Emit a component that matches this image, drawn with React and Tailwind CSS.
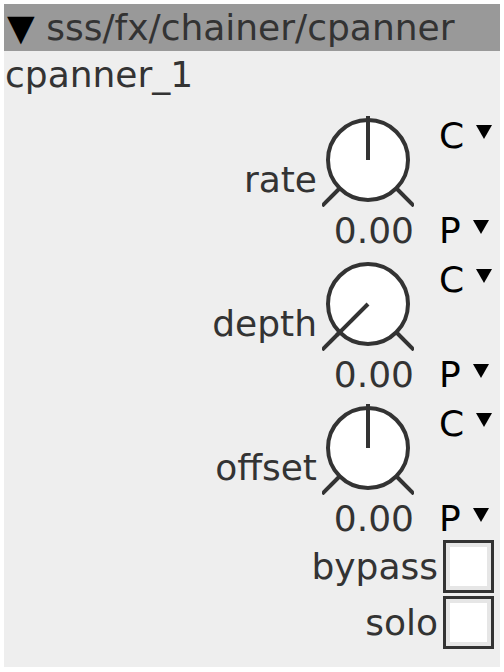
import React from "react";

function Knob({ angle }) {
  const cx = 46, cy = 48;
  const rad = (a) => (a * Math.PI) / 180;
  const ix = cx + 44 * Math.sin(rad(angle));
  const iy = cy - 44 * Math.cos(rad(angle));
  const t = (a, r) => [cx + r * Math.sin(rad(a)), cy - r * Math.cos(rad(a))];
  const [l1x, l1y] = t(-135, 40);
  const [l2x, l2y] = t(-135, 65);
  const [r1x, r1y] = t(135, 40);
  const [r2x, r2y] = t(135, 65);
  return (
    <svg width="92" height="95" viewBox="0 0 92 95" className="block w-[92px] h-[95px] shrink-0">
      <circle cx={cx} cy={cy} r="40" fill="#ffffff" stroke="#333333" strokeWidth="4" />
      <line x1={l1x} y1={l1y} x2={l2x} y2={l2y} stroke="#333333" strokeWidth="4" />
      <line x1={r1x} y1={r1y} x2={r2x} y2={r2y} stroke="#333333" strokeWidth="4" />
      <line x1={cx} y1={cy} x2={ix} y2={iy} stroke="#333333" strokeWidth="4" />
    </svg>
  );
}

function Drop({ letter }) {
  return (
    <div className="flex items-start h-[47px] pl-[25px]">
      <span className="leading-[47px] text-black shrink-0">{letter}</span>
      <svg width="16" height="14" viewBox="0 0 16 14" className="block w-[16px] h-[14px] shrink-0 mt-[13px] ml-[12px]">
        <polygon points="0,0 16,0 8,14" fill="#000000" />
      </svg>
    </div>
  );
}

function Param({ label, angle }) {
  return (
    <div className="h-[142px] flex justify-end">
      <div className="mt-[44px] leading-[47px] pr-[5px] text-[#333333]">{label}</div>
      <div className="w-[92px] flex flex-col">
        <Knob angle={angle} />
        <div className="leading-[47px] text-right text-[#333333]">0.00</div>
      </div>
      <div className="w-[86px] flex flex-col justify-between">
        <Drop letter="C" />
        <Drop letter="P" />
      </div>
    </div>
  );
}

function Check({ label }) {
  return (
    <div className="h-[56px] flex justify-end items-start">
      <div className="leading-[47px] mt-[3px] pr-[5px] text-[#333333]">{label}</div>
      <div className="w-[51px] h-[53px] border-[3px] border-[#333333] bg-[#e6e6e6] p-[4px] mr-[6px]">
        <div className="w-full h-full bg-white"></div>
      </div>
    </div>
  );
}

export default function App() {
  return (
    <div
      className="w-[504px] h-[672px] bg-white pt-[4px] px-[4px] pb-[5px] text-[36px]"
      style={{ fontFamily: '"DejaVu Sans", sans-serif' }}
    >
      <div className="h-full bg-[#eeeeee] flex flex-col">
        <div className="h-[47px] bg-[#999999] leading-[47px] text-[#333333] pl-[3px] whitespace-nowrap">
          <span className="text-black">▼</span> sss/fx/chainer/cpanner
        </div>
        <div className="h-[47px] leading-[47px] text-[#333333] pl-[1px]">cpanner_1</div>
        <div className="mt-[14px] flex flex-col gap-[2px]">
          <Param label="rate" angle={0} />
          <Param label="depth" angle={-135} />
          <Param label="offset" angle={0} />
        </div>
        <div className="-mt-[2px] flex flex-col">
          <Check label="bypass" />
          <Check label="solo" />
        </div>
      </div>
    </div>
  );
}
